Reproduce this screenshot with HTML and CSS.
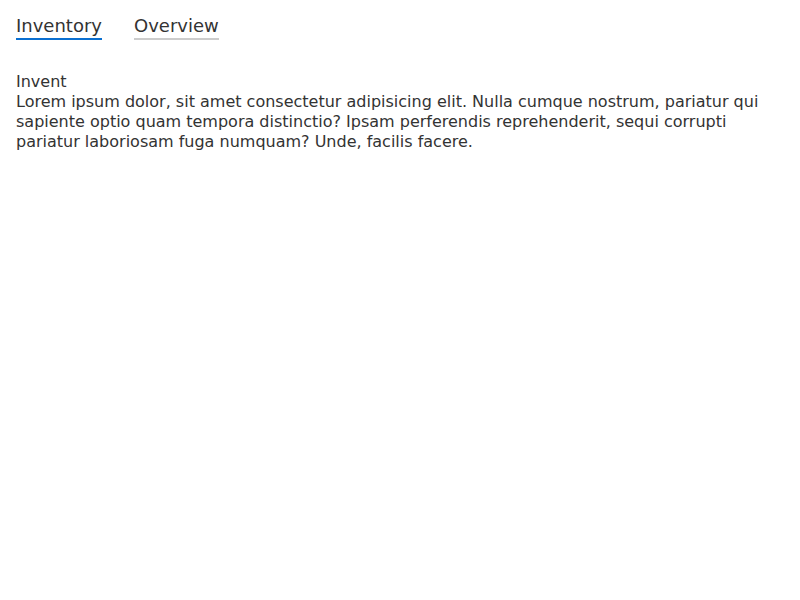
FILE: index.html
```html
<!DOCTYPE html>
<html>
<head>
<meta charset="utf-8">
<link rel="stylesheet" href="styles.css">
</head>
<body>
<div class="page">
  <nav class="tabs">
    <span class="tab active">Inventory</span>
    <span class="tab">Overview</span>
  </nav>
  <div class="panel">
    <div>Invent</div>
    <div>Lorem ipsum dolor, sit amet consectetur adipisicing elit. Nulla cumque nostrum, pariatur qui sapiente optio quam tempora distinctio? Ipsam perferendis reprehenderit, sequi corrupti pariatur laboriosam fuga numquam? Unde, facilis facere.</div>
  </div>
</div>
</body>
</html>
```
FILE: styles.css
```css
html, body { margin: 0; background: #fff; }
body { font-family: "DejaVu Sans", sans-serif; color: #333; }
.page { padding: 16px; }
.tabs { display: flex; gap: 32px; }
.tab { font-size: 18px; line-height: 20px; padding-bottom: 2px; border-bottom: 2px solid #ccc; }
.tab.active { border-bottom-color: #0a6fd0; }
.panel { margin-top: 32px; font-size: 16px; line-height: 20px; }
```
